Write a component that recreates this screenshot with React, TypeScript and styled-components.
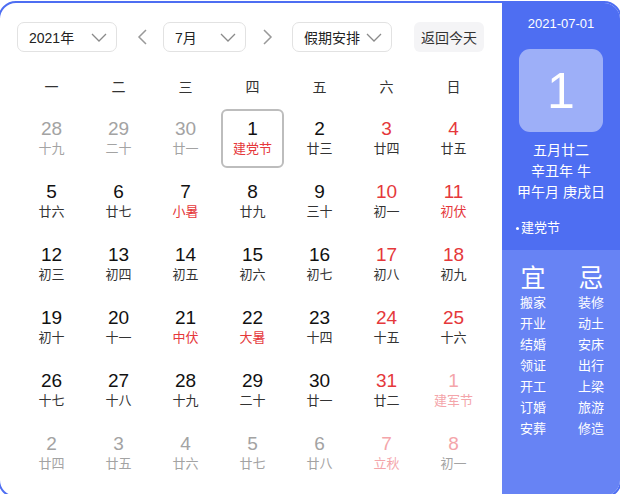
import styled, { createGlobalStyle } from "styled-components";

const BLUE = "#4e6ef2";
const BLUE_LIGHT = "#6783f4";
const RED = "#e5383b";
const PINK = "#f4a5aa";
const GRAY = "#a3a3a3";

const GlobalStyle = createGlobalStyle`
  html, body {
    margin: 0;
    padding: 0;
    background: #fff;
    overflow: hidden;
  }
  body {
    font-family: "Liberation Sans", "Noto Sans CJK SC", Arial, sans-serif;
    color: #222;
  }
`;

type Tone = "normal" | "red" | "gray" | "pink";

type Day = {
  day: number;
  lunar: string;
  num?: Tone;
  sub?: Tone;
  selected?: boolean;
};

const toneColor = (tone: Tone | undefined, base: string) => {
  switch (tone) {
    case "red":
      return RED;
    case "gray":
      return GRAY;
    case "pink":
      return PINK;
    default:
      return base;
  }
};

const Frame = styled.div`
  box-sizing: border-box;
  margin: 1px 0 0 -2px;
  width: 624px;
  height: 497px;
  border: 2px solid ${BLUE};
  border-radius: 18px;
  overflow: hidden;
  display: flex;
  background: #fff;
`;

const Main = styled.div`
  width: 502px;
  flex-shrink: 0;
  padding-top: 19px;
`;

const Toolbar = styled.div`
  display: flex;
  align-items: center;
  height: 30px;
  padding-left: 17px;
`;

const Select = styled.div<{ $width: number }>`
  box-sizing: border-box;
  width: ${(p) => p.$width}px;
  height: 30px;
  border: 1px solid #e2e2e2;
  border-radius: 7px;
  display: flex;
  align-items: center;
  justify-content: space-between;
  padding: 0 9px 0 11px;
  font-size: 14px;
  color: #222;
`;

const NavArrow = styled.div<{ $ml: number; $mr: number }>`
  width: 12px;
  height: 16px;
  margin: 0 ${(p) => p.$mr}px 0 ${(p) => p.$ml}px;
  display: flex;
  align-items: center;
  justify-content: center;
`;

const TodayButton = styled.div`
  margin-left: 22px;
  width: 70px;
  height: 30px;
  border-radius: 6px;
  background: #f4f4f6;
  display: flex;
  align-items: center;
  justify-content: center;
  font-size: 14px;
  color: #333;
`;

const Grid = styled.div`
  display: grid;
  grid-template-columns: repeat(7, 63px);
  column-gap: 4px;
  padding-left: 20px;
`;

const WeekHeader = styled(Grid)`
  margin-top: 25px;
  height: 20px;
  line-height: 20px;
`;

const WeekDay = styled.div`
  text-align: center;
  font-size: 14px;
  color: #333;
`;

const DayGrid = styled(Grid)`
  margin-top: 12px;
  row-gap: 4px;
`;

const Cell = styled.div<{ $selected?: boolean }>`
  box-sizing: border-box;
  height: 59px;
  padding-top: ${(p) => (p.$selected ? 7 : 9)}px;
  border: ${(p) => (p.$selected ? "2px solid #bdbdbd" : "none")};
  border-radius: 6px;
  text-align: center;
`;

const DayNum = styled.div<{ $tone?: Tone }>`
  font-size: 19px;
  line-height: 22px;
  color: ${(p) => toneColor(p.$tone, "#111")};
`;

const Lunar = styled.div<{ $tone?: Tone }>`
  font-size: 13px;
  line-height: 18px;
  color: ${(p) => toneColor(p.$tone, "#333")};
`;

const Side = styled.div`
  flex: 1;
  display: flex;
  flex-direction: column;
  color: #fff;
`;

const SideTop = styled.div`
  background: ${BLUE};
  display: flex;
  flex-direction: column;
  align-items: center;
  padding: 11px 0 12px;
`;

const DateLine = styled.div`
  font-size: 13px;
  line-height: 20px;
`;

const BigDay = styled.div`
  margin-top: 15px;
  width: 84px;
  height: 83px;
  border-radius: 11px;
  background: rgba(255, 255, 255, 0.45);
  display: flex;
  align-items: center;
  justify-content: center;
  font-size: 50px;
  line-height: 1;
  color: #fff;
`;

const LunarInfo = styled.div`
  margin-top: 8px;
  font-size: 14px;
  line-height: 21px;
  text-align: center;
`;

const Festival = styled.div`
  align-self: flex-start;
  margin: 15px 0 0 14px;
  font-size: 13px;
  line-height: 20px;
  display: flex;
  align-items: center;
  gap: 2px;
`;

const Dot = styled.span`
  width: 3px;
  height: 3px;
  border-radius: 50%;
  background: #fff;
  margin-top: 1px;
`;

const SideBottom = styled.div`
  flex: 1;
  background: ${BLUE_LIGHT};
  display: grid;
  grid-template-columns: 50px 50px;
  column-gap: 8px;
  align-content: start;
  padding: 14px 0 0 6px;
`;

const AdviceColumn = styled.div`
  display: flex;
  flex-direction: column;
  align-items: center;
`;

const AdviceTitle = styled.div`
  font-size: 25px;
  line-height: 28px;
`;

const AdviceItem = styled.div`
  font-size: 13px;
  line-height: 21px;
`;

function Chevron() {
  return (
    <svg width="16" height="9" viewBox="0 0 16 9" fill="none">
      <polyline points="1,1 8,8 15,1" stroke="#8a8a8a" strokeWidth="1.3" />
    </svg>
  );
}

function Arrow({ dir }: { dir: "left" | "right" }) {
  const points = dir === "left" ? "9,1 2,8 9,15" : "3,1 10,8 3,15";
  return (
    <svg width="12" height="16" viewBox="0 0 12 16" fill="none">
      <polyline points={points} stroke="#999" strokeWidth="1.5" />
    </svg>
  );
}

const WEEK = ["一", "二", "三", "四", "五", "六", "日"];

const DAYS: Day[] = [
  { day: 28, lunar: "十九", num: "gray", sub: "gray" },
  { day: 29, lunar: "二十", num: "gray", sub: "gray" },
  { day: 30, lunar: "廿一", num: "gray", sub: "gray" },
  { day: 1, lunar: "建党节", sub: "red", selected: true },
  { day: 2, lunar: "廿三" },
  { day: 3, lunar: "廿四", num: "red" },
  { day: 4, lunar: "廿五", num: "red" },

  { day: 5, lunar: "廿六" },
  { day: 6, lunar: "廿七" },
  { day: 7, lunar: "小暑", sub: "red" },
  { day: 8, lunar: "廿九" },
  { day: 9, lunar: "三十" },
  { day: 10, lunar: "初一", num: "red" },
  { day: 11, lunar: "初伏", num: "red", sub: "red" },

  { day: 12, lunar: "初三" },
  { day: 13, lunar: "初四" },
  { day: 14, lunar: "初五" },
  { day: 15, lunar: "初六" },
  { day: 16, lunar: "初七" },
  { day: 17, lunar: "初八", num: "red" },
  { day: 18, lunar: "初九", num: "red" },

  { day: 19, lunar: "初十" },
  { day: 20, lunar: "十一" },
  { day: 21, lunar: "中伏", sub: "red" },
  { day: 22, lunar: "大暑", sub: "red" },
  { day: 23, lunar: "十四" },
  { day: 24, lunar: "十五", num: "red" },
  { day: 25, lunar: "十六", num: "red" },

  { day: 26, lunar: "十七" },
  { day: 27, lunar: "十八" },
  { day: 28, lunar: "十九" },
  { day: 29, lunar: "二十" },
  { day: 30, lunar: "廿一" },
  { day: 31, lunar: "廿二", num: "red" },
  { day: 1, lunar: "建军节", num: "pink", sub: "pink" },

  { day: 2, lunar: "廿四", num: "gray", sub: "gray" },
  { day: 3, lunar: "廿五", num: "gray", sub: "gray" },
  { day: 4, lunar: "廿六", num: "gray", sub: "gray" },
  { day: 5, lunar: "廿七", num: "gray", sub: "gray" },
  { day: 6, lunar: "廿八", num: "gray", sub: "gray" },
  { day: 7, lunar: "立秋", num: "pink", sub: "pink" },
  { day: 8, lunar: "初一", num: "pink", sub: "gray" },
];

const GOOD = ["搬家", "开业", "结婚", "领证", "开工", "订婚", "安葬"];
const BAD = ["装修", "动土", "安床", "出行", "上梁", "旅游", "修造"];

export default function App() {
  return (
    <>
      <GlobalStyle />
      <Frame>
        <Main>
          <Toolbar>
            <Select $width={100}>
              <span>2021年</span>
              <Chevron />
            </Select>
            <NavArrow $ml={20} $mr={14}>
              <Arrow dir="left" />
            </NavArrow>
            <Select $width={83}>
              <span>7月</span>
              <Chevron />
            </Select>
            <NavArrow $ml={15} $mr={19}>
              <Arrow dir="right" />
            </NavArrow>
            <Select $width={100}>
              <span>假期安排</span>
              <Chevron />
            </Select>
            <TodayButton>返回今天</TodayButton>
          </Toolbar>

          <WeekHeader>
            {WEEK.map((w) => (
              <WeekDay key={w}>{w}</WeekDay>
            ))}
          </WeekHeader>

          <DayGrid>
            {DAYS.map((d, i) => (
              <Cell key={i} $selected={d.selected}>
                <DayNum $tone={d.num}>{d.day}</DayNum>
                <Lunar $tone={d.sub}>{d.lunar}</Lunar>
              </Cell>
            ))}
          </DayGrid>
        </Main>

        <Side>
          <SideTop>
            <DateLine>2021-07-01</DateLine>
            <BigDay>1</BigDay>
            <LunarInfo>
              <div>五月廿二</div>
              <div>辛丑年 牛</div>
              <div>甲午月 庚戌日</div>
            </LunarInfo>
            <Festival>
              <Dot />
              建党节
            </Festival>
          </SideTop>
          <SideBottom>
            <AdviceColumn>
              <AdviceTitle>宜</AdviceTitle>
              {GOOD.map((g) => (
                <AdviceItem key={g}>{g}</AdviceItem>
              ))}
            </AdviceColumn>
            <AdviceColumn>
              <AdviceTitle>忌</AdviceTitle>
              {BAD.map((b) => (
                <AdviceItem key={b}>{b}</AdviceItem>
              ))}
            </AdviceColumn>
          </SideBottom>
        </Side>
      </Frame>
    </>
  );
}
